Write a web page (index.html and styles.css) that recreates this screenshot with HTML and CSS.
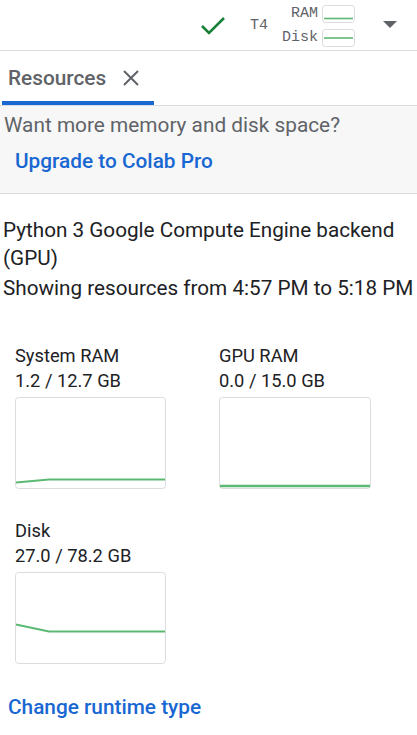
FILE: index.html
```html
<!DOCTYPE html>
<html>
<head>
<meta charset="utf-8">
<link rel="stylesheet" href="styles.css">
</head>
<body>
<div class="topbar">
  <svg class="check" width="26" height="20" viewBox="0 0 26 20"><path d="M2 10 L9 17 L24 2" fill="none" stroke="#188038" stroke-width="2.6"/></svg>
  <span class="gpu">T4</span>
  <div class="meters">
    <div class="meter"><span>RAM</span><svg class="mini" width="33" height="18" viewBox="0 0 33 18"><rect x="0.5" y="0.5" width="32" height="17" rx="3" fill="#fff" stroke="#dadce0"/><line x1="2" y1="13.5" x2="31" y2="13.5" stroke="#5bb974" stroke-width="1.6"/></svg></div>
    <div class="meter"><span>Disk</span><svg class="mini" width="33" height="18" viewBox="0 0 33 18"><rect x="0.5" y="0.5" width="32" height="17" rx="3" fill="#fff" stroke="#dadce0"/><line x1="2" y1="9" x2="31" y2="9" stroke="#5bb974" stroke-width="1.6"/></svg></div>
  </div>
  <svg class="caret" width="16" height="10" viewBox="0 0 16 10"><path d="M1 1 L15 1 L8 8 Z" fill="#5f6368"/></svg>
</div>
<div class="tabs">
  <div class="tab">
    <span class="tab-label">Resources</span>
    <svg class="close" width="18" height="18" viewBox="0 0 18 18"><path d="M2 2 L16 16 M16 2 L2 16" stroke="#5f6368" stroke-width="2"/></svg>
  </div>
</div>
<div class="promo">
  <div class="promo-text">Want more memory and disk space?</div>
  <a class="link upgrade">Upgrade to Colab Pro</a>
</div>
<div class="content">
  <p class="backend">Python 3 Google Compute Engine backend (GPU)</p>
  <p class="range">Showing resources from 4:57 PM to 5:18 PM</p>
  <div class="charts">
    <div class="chart">
      <div class="chart-title">System RAM</div>
      <div class="chart-value">1.2 / 12.7 GB</div>
      <svg class="plot" width="151" height="92" viewBox="0 0 151 92"><rect x="0.5" y="0.5" width="150" height="91" rx="3" fill="#fff" stroke="#dadce0"/><polyline points="1,85.5 34,82.5 150,82.5" fill="none" stroke="#5bb974" stroke-width="2"/></svg>
    </div>
    <div class="chart">
      <div class="chart-title">GPU RAM</div>
      <div class="chart-value">0.0 / 15.0 GB</div>
      <svg class="plot" width="152" height="92" viewBox="0 0 152 92"><rect x="0.5" y="0.5" width="151" height="91" rx="3" fill="#fff" stroke="#dadce0"/><line x1="1" y1="89" x2="151" y2="89" stroke="#5bb974" stroke-width="2.4"/></svg>
    </div>
    <div class="chart">
      <div class="chart-title">Disk</div>
      <div class="chart-value">27.0 / 78.2 GB</div>
      <svg class="plot" width="151" height="92" viewBox="0 0 151 92"><rect x="0.5" y="0.5" width="150" height="91" rx="3" fill="#fff" stroke="#dadce0"/><polyline points="1,52.5 34,59.5 150,59.5" fill="none" stroke="#5bb974" stroke-width="2"/></svg>
    </div>
  </div>
  <a class="link change">Change runtime type</a>
</div>
</body>
</html>
```
FILE: styles.css
```css
html, body {
  margin: 0;
  padding: 0;
  background: #fff;
  font-family: Roboto, "Noto Sans", sans-serif;
  color: #202124;
}
.topbar {
  height: 50px;
  border-bottom: 1px solid #dadce0;
  display: flex;
  align-items: center;
  justify-content: flex-end;
  padding-right: 19px;
  box-sizing: content-box;
}
.check {
  margin-right: 24px;
  margin-top: 2px;
}
.gpu {
  font-family: "Liberation Mono", "DejaVu Sans Mono", monospace;
  font-size: 15px;
  color: #5f6368;
  margin-right: 14px;
  margin-top: 1px;
}
.meters {
  display: flex;
  flex-direction: column;
  align-items: flex-end;
  gap: 6px;
  margin-top: 1px;
}
.meter {
  display: flex;
  align-items: center;
  gap: 4px;
  height: 18px;
}
.meter span {
  font-family: "Liberation Mono", "DejaVu Sans Mono", monospace;
  font-size: 15px;
  color: #5f6368;
}
.caret {
  margin-left: 27px;
}
.tabs {
  height: 54px;
  border-bottom: 1px solid #dadce0;
  display: flex;
  align-items: flex-end;
  padding-left: 2px;
}
.tab {
  width: 152px;
  height: 54px;
  box-sizing: border-box;
  border-bottom: 4px solid #1967d2;
  border-radius: 4px 4px 0 0;
  display: flex;
  align-items: center;
  padding-left: 6px;
  padding-top: 3px;
}
.tab-label {
  font-size: 20.8px;
  color: #5f6368;
  font-weight: 500;
  margin-right: 16px;
}
.promo {
  background: #f7f7f7;
  height: 88px;
  border-bottom: 1px solid #dadce0;
  padding: 7px 0 0 4px;
  box-sizing: border-box;
}
.promo-text {
  font-size: 20.8px;
  color: #5f6368;
  line-height: 24px;
}
.link {
  display: inline-block;
  color: #1967d2;
  font-weight: 500;
  font-size: 20.8px;
  text-decoration: none;
}
.upgrade {
  margin-top: 12px;
  margin-left: 11px;
}
.content {
  padding: 0 0 0 3px;
}
.backend {
  margin: 22px 0 0 0;
  font-size: 20.7px;
  line-height: 28px;
  color: #202124;
}
.range {
  margin: 2px 0 0 0;
  font-size: 20.7px;
  line-height: 28px;
  color: #202124;
}
.charts {
  display: grid;
  grid-template-columns: 204px 160px;
  padding-left: 12px;
  margin-top: 41px;
  row-gap: 29px;
}
.chart-title, .chart-value {
  font-size: 18.3px;
  line-height: 25px;
  color: #202124;
}
.plot {
  display: block;
  margin-top: 4px;
}
.change {
  margin: 31px 0 0 5px;
}
```
